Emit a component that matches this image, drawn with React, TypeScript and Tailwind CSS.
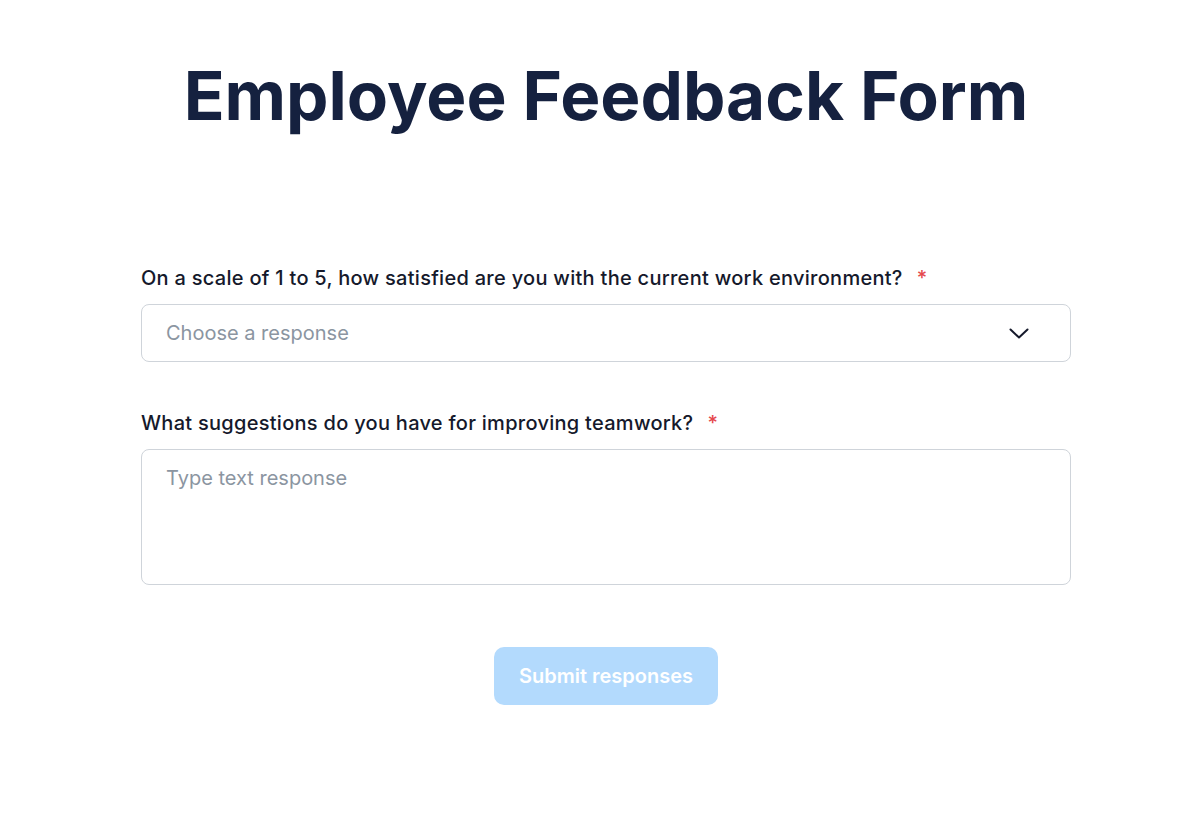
export default function App() {
  return (
    <div
      className="min-h-[832px] w-full bg-white"
      style={{ fontFamily: "Inter, 'Noto Sans', sans-serif" }}
    >
      <div className="ml-[141px] flex w-[930px] flex-col pt-[54px]">
        <h1 className="text-center text-[67.4px] font-bold leading-[84px] text-[#15213f]">
          Employee Feedback Form
        </h1>

        <form className="mt-[126px] flex flex-col">
          <label className="flex items-center text-[20px] font-medium leading-[28px] tracking-[0.28px] text-[#15192b]">
            On a scale of 1 to 5, how satisfied are you with the current work environment?
            <span className="ml-[14px] text-[#e5484d]">*</span>
          </label>
          <div className="mt-[12px] flex h-[58px] items-center justify-between rounded-[8px] border border-[#cfd4da] pl-[24px] pr-[41px]">
            <span className="text-[20px] text-[#8b95a1]">Choose a response</span>
            <svg width="20" height="11" viewBox="0 0 20 11" fill="none">
              <path
                d="M1.5 1.5 10 9.5 18.5 1.5"
                stroke="#15192b"
                strokeWidth="2"
                strokeLinecap="round"
                strokeLinejoin="round"
              />
            </svg>
          </div>

          <label className="mt-[47px] flex items-center text-[20px] font-medium leading-[28px] tracking-[0.28px] text-[#15192b]">
            What suggestions do you have for improving teamwork?
            <span className="ml-[14px] text-[#e5484d]">*</span>
          </label>
          <div className="mt-[12px] h-[136px] rounded-[8px] border border-[#cfd4da] px-[24px] pt-[14px]">
            <span className="text-[20px] leading-[28px] text-[#8b95a1]">Type text response</span>
          </div>

          <div className="mt-[62px] flex justify-center">
            <button
              type="button"
              className="h-[58px] w-[224px] rounded-[10px] bg-[#b3dafd] text-[20px] font-semibold text-white"
            >
              Submit responses
            </button>
          </div>
        </form>
      </div>
    </div>
  );
}
